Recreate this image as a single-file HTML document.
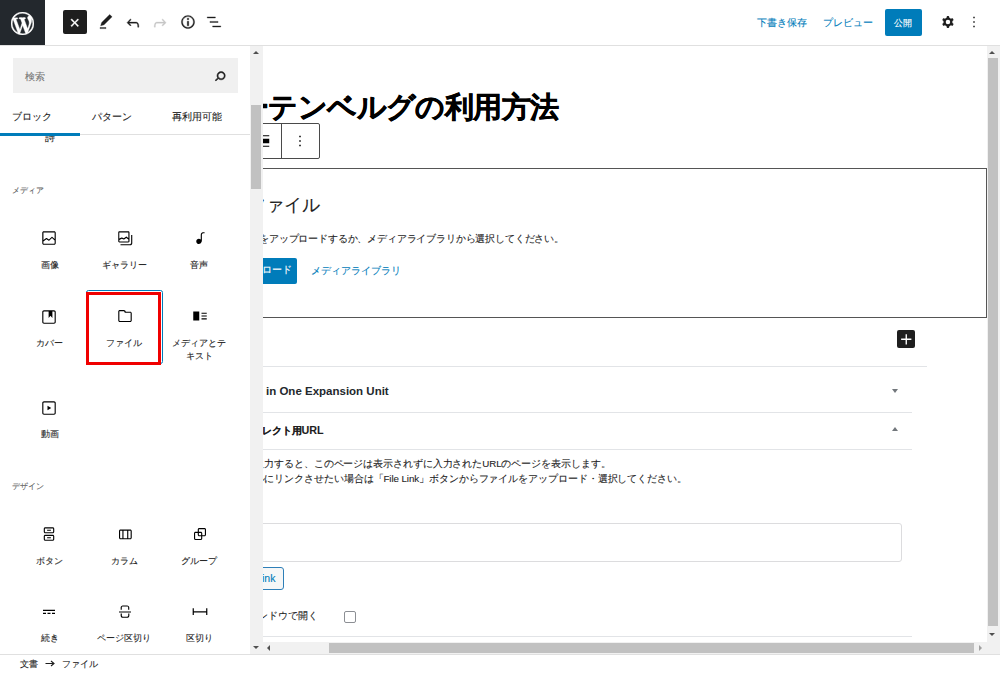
<!DOCTYPE html>
<html><head><meta charset="utf-8">
<style>
html,body{margin:0;padding:0;background:#fff;}
body{width:1000px;height:673px;overflow:hidden;position:relative;font-family:"Liberation Sans",sans-serif;color:#1e1e1e;font-size:9.75px;-webkit-text-stroke:0.1px currentColor;}
.a{position:absolute;}
.ic{position:absolute;width:18px;height:18px;}
.t{position:absolute;white-space:nowrap;line-height:1;}
.lbl{position:absolute;white-space:nowrap;line-height:13px;text-align:center;width:76px;font-size:9.3px;color:#1e1e1e;}
.cat{position:absolute;font-size:8.3px;color:#5f5f5f;line-height:1;white-space:nowrap;}
</style></head><body>

<!-- HEADER -->
<div class="a" style="left:0;top:0;width:45px;height:45px;background:#23282d;"></div>
<svg class="a" style="left:11px;top:11.5px;width:23px;height:23px" viewBox="0 0 20 20"><path fill="#fff" stroke="#fff" stroke-width="0.35" d="M20 10c0-5.51-4.49-10-10-10C4.48 0 0 4.49 0 10c0 5.52 4.48 10 10 10 5.51 0 10-4.48 10-10zM7.780 15.370L4.370 6.220c.55-.02 1.170-.08 1.170-.08.5-.06.44-1.130-.06-1.110 0 0-1.450.11-2.370.11-.18 0-.37 0-.58-.01C4.120 2.690 6.870 1.110 10 1.110c2.330 0 4.450.87 6.050 2.340-.68-.11-1.650.39-1.650 1.580 0 .74.45 1.360.9 2.100.35.61.55 1.360.55 2.460 0 1.490-1.400 5-1.400 5l-3.030-8.370c.54-.02.82-.17.82-.17.5-.05.44-1.250-.06-1.220 0 0-1.440.12-2.380.12-.87 0-2.330-.12-2.330-.12-.5-.03-.56 1.200-.06 1.220l.92.08 1.260 3.410zM17.410 10c.24-.64.74-1.870.43-4.250.7 1.290 1.050 2.710 1.050 4.250 0 3.290-1.730 6.240-4.400 7.780.97-2.590 1.940-5.200 2.920-7.780zM6.100 18.090C3.120 16.650 1.110 13.530 1.110 10c0-1.300.23-2.480.72-3.590C3.250 10.300 4.670 14.200 6.100 18.090zm4.030-6.630l2.580 6.980c-.86.29-1.760.45-2.710.45-.79 0-1.570-.11-2.290-.33.81-2.380 1.620-4.740 2.420-7.100z"/></svg>
<div class="a" style="left:0;top:45px;width:1000px;height:1px;background:#e0e0e0;"></div>

<div class="a" style="left:63px;top:10px;width:24px;height:24px;background:#1e1e1e;border-radius:2px;"></div>
<svg class="a" style="left:65.1px;top:12.75px;width:19.5px;height:19.5px" viewBox="0 0 24 24"><path fill="#fff" stroke="#fff" stroke-width="0.5" d="M12 13.06l3.712 3.713 1.061-1.06L13.061 12l3.712-3.712-1.06-1.06L12 10.938 8.288 7.227l-1.061 1.06L10.939 12l-3.712 3.712 1.06 1.061L12 13.061z"/></svg>
<svg class="ic" style="left:97px;top:13.2px" viewBox="0 0 24 24"><path fill="#1e1e1e" stroke="#1e1e1e" stroke-width="0.45" d="M20.1 5.1L16.9 2 6.2 12.7l-1.3 4.4 4.5-1.3L20.1 5.1zM4 20.8h8v-1.5H4v1.5z"/></svg>
<svg class="ic" style="left:124px;top:13.5px" viewBox="0 0 24 24"><path fill="#1e1e1e" stroke="#1e1e1e" stroke-width="0.45" d="M18.3 11.7c-.6-.6-1.4-.9-2.3-.9H6.7l2.9-3.3-1.1-1-4.5 5L8.5 16l1-1-2.7-2.7H16c.5 0 .9.2 1.3.5 1 1 1 3.4 1 4.5v.3h1.5v-.2c0-1.5 0-4.3-1.5-5.7z"/></svg>
<svg class="ic" style="left:151px;top:13.5px" viewBox="0 0 24 24"><path fill="#c7c7c7" stroke="#c7c7c7" stroke-width="0.45" d="M15.6 6.5l-1.1 1 2.9 3.3H8c-.9 0-1.7.3-2.3.9-1.4 1.5-1.4 4.2-1.4 5.6v.2h1.5v-.3c0-1.1 0-3.5 1-4.5.3-.3.7-.5 1.3-.5h9.2L14.5 15l1.1 1.1 4.6-4.6-4.6-5z"/></svg>
<svg class="ic" style="left:178.5px;top:12.9px" viewBox="0 0 24 24"><path fill="#1e1e1e" stroke="#1e1e1e" stroke-width="0.45" d="M12 3.2c-4.8 0-8.8 3.9-8.8 8.8 0 4.8 3.9 8.8 8.8 8.8 4.8 0 8.8-3.9 8.8-8.8 0-4.8-4-8.8-8.8-8.8zm0 16c-4 0-7.2-3.3-7.2-7.2C4.8 8 8 4.8 12 4.8s7.2 3.3 7.2 7.2c0 4-3.2 7.2-7.2 7.2zM11 17h2v-6h-2v6zm0-8h2V7h-2v2z"/></svg>
<svg class="ic" style="left:205px;top:13.3px" viewBox="0 0 24 24"><path fill="#1e1e1e" stroke="#1e1e1e" stroke-width="0.45" d="M13.8 5.2H3v1.5h10.8V5.2zm-3.6 12v1.5H21v-1.5H10.2zm7.2-6H6.6v1.5h10.8v-1.5z"/></svg>

<div class="t" style="left:756.5px;top:17.5px;color:#007cba;font-size:9.5px;">下書き保存</div>
<div class="t" style="left:822.5px;top:17.5px;color:#007cba;font-size:9.5px;">プレビュー</div>
<div class="a" style="left:885px;top:9px;width:37px;height:26.5px;background:#007cba;border-radius:2px;"></div>
<div class="t" style="left:893.8px;top:17.6px;color:#fff;font-size:9.4px;">公開</div>
<svg class="ic" style="left:938.5px;top:13.3px" viewBox="0 0 24 24"><path fill="#1e1e1e" fill-rule="evenodd" clip-rule="evenodd" d="M10.289 4.836A1 1 0 0111.275 4h1.306a1 1 0 01.987.836l.244 1.466c.787.26 1.503.679 2.108 1.218l1.393-.522a1 1 0 011.216.437l.653 1.13a1 1 0 01-.23 1.273l-1.148.944a6.025 6.025 0 010 2.435l1.149.946a1 1 0 01.23 1.272l-.653 1.13a1 1 0 01-1.216.437l-1.394-.522c-.605.54-1.32.958-2.108 1.218l-.244 1.466a1 1 0 01-.987.836h-1.306a1 1 0 01-.986-.836l-.244-1.466a5.995 5.995 0 01-2.108-1.218l-1.394.522a1 1 0 01-1.217-.436l-.653-1.131a1 1 0 01.23-1.272l1.149-.946a6.026 6.026 0 010-2.435l-1.148-.944a1 1 0 01-.23-1.272l.653-1.131a1 1 0 011.217-.437l1.393.522a5.994 5.994 0 012.108-1.218l.244-1.466zM14.929 12a3 3 0 11-6 0 3 3 0 016 0z"/></svg>
<svg class="ic" style="left:965.4px;top:13.4px" viewBox="0 0 24 24"><path fill="#1e1e1e" d="M13 19h-2v-2h2v2zm0-6h-2v-2h2v2zm0-6h-2V5h2v2z"/></svg>

<!-- SIDEBAR -->
<div class="a" style="left:13px;top:58px;width:225px;height:35px;background:#f0f0f0;"></div>
<div class="t" style="left:25px;top:72px;color:#757575;">検索</div>
<svg class="ic" style="left:210.9px;top:66.5px" viewBox="0 0 24 24"><path fill="#1e1e1e" stroke="#1e1e1e" stroke-width="0.7" d="M13.5 6C10.5 6 8 8.5 8 11.5c0 1.1.3 2.1.9 3l-3.4 3 1 1.1 3.4-2.9c1 .9 2.2 1.4 3.6 1.4 3 0 5.5-2.5 5.5-5.5C19 8.5 16.5 6 13.5 6zm0 9.5c-2.2 0-4-1.8-4-4s1.8-4 4-4 4 1.8 4 4-1.8 4-4 4z"/></svg>

<div class="t" style="left:12px;top:112px;">ブロック</div>
<div class="t" style="left:92px;top:112px;">パターン</div>
<div class="t" style="left:172px;top:112px;">再利用可能</div>
<div class="a" style="left:0;top:134px;width:249.5px;height:1px;background:#e0e0e0;"></div>
<div class="a" style="left:0;top:132.5px;width:80px;height:3px;background:#007cba;"></div>

<div id="sbs" class="a" style="left:0;top:135.5px;width:249.5px;height:518.5px;overflow:hidden;">
  <div class="a" style="left:0;top:-135.5px;width:249.5px;height:700px;">
    <div class="t" style="left:45px;top:133px;">詩</div>
    <div class="cat" style="left:12px;top:186px;">メディア</div>
    <!-- row1 -->
    <svg class="ic" style="left:40.25px;top:228.75px" viewBox="0 0 24 24"><path d="M19 3H5c-1.1 0-2 .9-2 2v14c0 1.1.9 2 2 2h14c1.100 0 2-.9 2-2V5c0-1.1-.9-2-2-2zM5 4.5h14c.3 0 .5.2.5.5v8.4l-3-2.9c-.3-.3-.8-.3-1 0L11.9 14 9 12c-.3-.2-.6-.2-.8 0l-3.6 2.6V5c-.1-.3.1-.5.4-.5zm14 15H5c-.3 0-.5-.2-.5-.5v-2.4l4.1-3 3 1.9c.3.2.7.2.9-.1L16 12l3.5 3.4V19c0 .3-.2.5-.5.5z"/></svg>
    <svg class="ic" style="left:116px;top:228.75px" viewBox="0 0 24 24"><path d="M20.2 8v11c0 .7-.6 1.2-1.2 1.2H6v1.5h13c1.5 0 2.7-1.2 2.7-2.8V8zM18 16.4V4.6c0-.9-.7-1.6-1.6-1.6H4.6C3.7 3 3 3.7 3 4.6v11.8c0 .9.7 1.6 1.6 1.6h11.8c.9 0 1.6-.7 1.6-1.6zM4.5 4.6c0-.1.1-.1.1-.1h11.8c.1 0 .1.1.1.1V12l-2.3-1.7c-.3-.2-.6-.2-.9 0l-2.9 2.1L8 11.3c-.2-.1-.5-.1-.7 0l-2.9 1.5V4.6zm0 11.8v-1.8l3.2-1.7 2.4 1.2c.2.1.5.1.8-.1l2.8-2 2.8 2v2.5c0 .1-.1.1-.1.1H4.6c0-.1-.1-.2-.1-.2z"/></svg>
    <svg class="ic" style="left:190.5px;top:228.75px" viewBox="0 0 24 24"><path d="M17.7 4.3c-1.2 0-2.8 0-3.8 1-.6.6-.9 1.5-.9 2.6V14c-.6-.6-1.5-1-2.5-1C8.6 13 7 14.6 7 16.5S8.6 20 10.5 20c1.5 0 2.8-1 3.3-2.3.5-.8.7-1.8.7-2.5V7.9c0-.7.2-1.2.5-1.6.6-.6 1.8-.6 2.8-.6h.3V4.3h-.4z"/></svg>
    <div class="lbl" style="left:11.5px;top:258.8px;">画像</div>
    <div class="lbl" style="left:86.3px;top:258.8px;">ギャラリー</div>
    <div class="lbl" style="left:161.3px;top:258.8px;">音声</div>
    <!-- row2 -->
    <div class="a" style="left:85.5px;top:289.5px;width:75.5px;height:72px;border:1.5px solid #007cba;border-radius:2.5px;"></div>
    <svg class="ic" style="left:40.25px;top:307.5px" viewBox="0 0 24 24"><path d="M18.7 3H5.3C4 3 3 4 3 5.3v13.4C3 20 4 21 5.3 21h13.4c1.3 0 2.3-1 2.3-2.3V5.3C21 4 20 3 18.7 3zm.8 15.7c0 .4-.4.8-.8.8H5.3c-.4 0-.8-.4-.8-.8V5.3c0-.4.4-.8.8-.8h6.2v8.9l2.5-3.100 2.5 3.100V4.5h2.2c.4 0 .8.4.8.8v13.4z"/></svg>
    <svg class="ic" style="left:115.5px;top:306.5px" viewBox="0 0 24 24"><path d="M19 6.2h-5.9l-.6-1.1C12 4.3 11.2 4 10.3 4H5c-1.1 0-2 .9-2 2v12c0 1.1.9 2 2 2h14c1.1 0 2-.9 2-2V8.2c0-1.1-.9-2-2-2zm.5 11.8c0 .3-.2.5-.5.5H5c-.3 0-.5-.2-.5-.5V6c0-.3.2-.5.5-.5h5.3c.3 0 .5.2.6.4l.7 1.3c.1.2.3.4.6.4H19c.3 0 .5.2.5.5V18z"/></svg>
    <svg class="ic" style="left:190.5px;top:306.5px" viewBox="0 0 24 24"><path d="M3 18h8V6H3v12zM14 7.5V9h7V7.5h-7zm0 5.3h7v-1.5h-7v1.5zm0 3.7h7V15h-7v1.5z"/></svg>
    <div class="lbl" style="left:11.5px;top:336.6px;">カバー</div>
    <div class="lbl" style="left:86.3px;top:336.6px;">ファイル</div>
    <div class="lbl" style="left:161.3px;top:336.6px;">メディアとテ<br>キスト</div>
    <div class="a" style="left:85.8px;top:292px;width:69.2px;height:66.7px;border:3px solid #f00000;"></div>
    <!-- row3 -->
    <svg class="ic" style="left:40.25px;top:398.75px" viewBox="0 0 24 24"><path d="M18.7 3H5.3C4 3 3 4 3 5.3v13.4C3 20 4 21 5.3 21h13.4c1.3 0 2.3-1 2.3-2.3V5.3C21 4 20 3 18.7 3zm.8 15.7c0 .4-.4.8-.8.8H5.3c-.4 0-.8-.4-.8-.8V5.3c0-.4.4-.8.8-.8h13.4c.4 0 .8.4.8.8v13.4zM10 15l5-3-5-3v6z"/></svg>
    <div class="lbl" style="left:11.5px;top:428.2px;">動画</div>

    <div class="cat" style="left:12px;top:482px;">デザイン</div>
    <svg class="ic" style="left:40.25px;top:524.75px" viewBox="0 0 24 24"><path d="M17 3H7c-1.1 0-2 .9-2 2v4c0 1.1.9 2 2 2h10c1.1 0 2-.9 2-2V5c0-1.1-.9-2-2-2zm.5 6c0 .3-.2.5-.5.5H7c-.3 0-.5-.2-.5-.5V5c0-.3.2-.5.5-.5h10c.3 0 .5.2.5.5v4zm-8-1.2h5V6.2h-5v1.6zM17 13H7c-1.1 0-2 .9-2 2v4c0 1.1.9 2 2 2h10c1.1 0 2-.9 2-2v-4c0-1.1-.9-2-2-2zm.5 6c0 .3-.2.5-.5.5H7c-.3 0-.5-.2-.5-.5v-4c0-.3.2-.5.5-.5h10c.3 0 .5.2.5.5v4zm-8-1.2h5v-1.5h-5v1.5z"/></svg>
    <svg class="ic" style="left:115.5px;top:524.75px" viewBox="0 0 24 24"><path d="M19 6H6c-1.1 0-2 .9-2 2v9c0 1.1.9 2 2 2h13c1.1 0 2-.9 2-2V8c0-1.1-.9-2-2-2zm-4.1 1.5v10H10v-10h4.9zM5.5 17V8c0-.3.2-.5.5-.5h2.5v10H6c-.3 0-.5-.2-.5-.5zm14 0c0 .3-.2.5-.5.5h-2.6v-10H19c.3 0 .5.2.5.5v9z"/></svg>
    <svg class="ic" style="left:190.5px;top:524.75px" viewBox="0 0 24 24"><path d="M18 4h-7c-1.1 0-2 .9-2 2v3H6c-1.1 0-2 .9-2 2v7c0 1.1.9 2 2 2h7c1.1 0 2-.9 2-2v-3h3c1.1 0 2-.9 2-2V6c0-1.1-.9-2-2-2zm-4.5 14c0 .3-.2.5-.5.5H6c-.3 0-.5-.2-.5-.5v-7c0-.3.2-.5.5-.5h3V13c0 1.1.9 2 2 2h2.5v3zm0-4.5H11c-.3 0-.5-.2-.5-.5v-2.5H13c.3 0 .5.2.5.5v2.5zm5-.5c0 .3-.2.5-.5.5h-3V11c0-1.1-.9-2-2-2h-2.5V6c0-.3.2-.5.5-.5h7c.3 0 .5.2.5.5v7z"/></svg>
    <div class="lbl" style="left:11.5px;top:554.8px;">ボタン</div>
    <div class="lbl" style="left:86.3px;top:554.8px;">カラム</div>
    <div class="lbl" style="left:161.3px;top:554.8px;">グループ</div>
    <svg class="ic" style="left:40.25px;top:602.75px" viewBox="0 0 24 24"><path d="M4 9v1.5h16V9H4zm12 5.5h4V13h-4v1.5zm-6 0h4V13h-4v1.5zm-6 0h4V13H4v1.5z"/></svg>
    <svg class="ic" style="left:115.5px;top:602.75px" viewBox="0 0 24 24"><path d="M7.8 6c0-.7.6-1.2 1.2-1.2h6c.7 0 1.2.6 1.2 1.2v3h1.5V6c0-1.5-1.2-2.8-2.8-2.8H9C7.5 3.2 6.2 4.5 6.2 6v3h1.5V6zm8.4 11c0 .7-.6 1.2-1.2 1.2H9c-.7 0-1.2-.6-1.2-1.2v-3H6.2v3c0 1.5 1.2 2.8 2.8 2.8h6c1.5 0 2.8-1.2 2.8-2.8v-3h-1.5v3zM4 11.2v1.5h16v-1.5H4z"/></svg>
    <svg class="ic" style="left:190.5px;top:602.75px" viewBox="0 0 24 24"><path d="M20.2 7v4H3.8V7H2.2v9h1.6v-3.5h16.4V16h1.6V7z"/></svg>
    <div class="lbl" style="left:11.5px;top:631.6px;">続き</div>
    <div class="lbl" style="left:86.3px;top:631.6px;">ページ区切り</div>
    <div class="lbl" style="left:161.3px;top:631.6px;">区切り</div>
  </div>
</div>

<!-- sidebar scrollbar -->
<div class="a" style="left:249.5px;top:46px;width:13px;height:608px;background:#f1f1f1;"></div>
<div class="a" style="left:251px;top:104.8px;width:9.7px;height:84.7px;background:#c1c1c1;"></div>
<div class="a" style="left:253px;top:50.5px;width:0;height:0;border-left:3.5px solid transparent;border-right:3.5px solid transparent;border-bottom:3.5px solid #505050;"></div>
<div class="a" style="left:253px;top:645.5px;width:0;height:0;border-left:3.5px solid transparent;border-right:3.5px solid transparent;border-top:3.5px solid #505050;"></div>

<!-- CANVAS -->
<div id="cv" class="a" style="left:262.5px;top:46px;width:724.5px;height:597px;overflow:hidden;">
  <div class="a" style="left:-262.5px;top:-46px;width:1000px;height:700px;">
    <div class="t" style="left:240.1px;top:93px;letter-spacing:-0.62px;font-size:29.25px;font-weight:bold;color:#000;-webkit-text-stroke:0.5px #000;">ーテンベルグの利用方法</div>
    <!-- block toolbar -->
    <div class="a" style="left:200px;top:123px;width:118px;height:33.7px;border:1px solid #4a4a4a;border-radius:2px;background:#fff;"></div>
    <div class="a" style="left:281px;top:123px;width:1px;height:35.7px;background:#4a4a4a;"></div>
    <svg class="ic" style="left:255px;top:132px" viewBox="0 0 24 24"><path d="M5 15h14V9H5v6zm0 4.8h14v-1.5H5v1.5zM5 4.2v1.5h14V4.2H5z"/></svg>
    <svg class="ic" style="left:291.3px;top:132px" viewBox="0 0 24 24"><path d="M13 19h-2v-2h2v2zm0-6h-2v-2h2v2zm0-6h-2V5h2v2z"/></svg>
    <!-- file block -->
    <div class="a" style="left:150px;top:168px;width:835px;height:148px;border:1px solid #555;"></div>
    <div class="t" style="left:248px;top:196px;font-size:18px;">ファイル</div>
    <div class="t" style="left:219.85px;top:234px;letter-spacing:-0.17px;">ファイルをアップロードするか、メディアライブラリから選択してください。</div>
    <div class="a" style="left:200px;top:257.5px;width:97px;height:26px;background:#007cba;border-radius:2px;"></div>
    <div class="t" style="left:262px;top:265px;color:#fff;">ロード</div>
    <div class="t" style="left:311px;top:265.5px;color:#007cba;font-size:9.5px;">メディアライブラリ</div>
    <!-- plus -->
    <div class="a" style="left:896.5px;top:330px;width:18.5px;height:17.5px;background:#1e1e1e;border-radius:2px;"></div>
    <svg class="a" style="left:895.5px;top:328.5px;width:20.5px;height:20.5px" viewBox="0 0 24 24"><path fill="#fff" d="M18 11.2h-5.2V6h-1.6v5.2H6v1.6h5.2V18h1.6v-5.2H18z"/></svg>

    <!-- metaboxes -->
    <div class="a" style="left:200px;top:366px;width:726.5px;height:1px;background:#e2e4e7;"></div>
    <div class="t" style="left:266px;top:386px;font-size:11.5px;font-weight:bold;color:#23282d;-webkit-text-stroke:0;">in One Expansion Unit</div>
    <div class="a" style="left:892px;top:388px;width:0;height:0;border-left:3.5px solid transparent;border-right:3.5px solid transparent;border-top:4px solid #72777c;margin-top:1px;"></div>
    <div class="a" style="left:200px;top:411.5px;width:711.5px;height:1px;background:#e2e4e7;"></div>
    <div class="t" style="left:261.5px;top:424.5px;font-size:10px;font-weight:bold;color:#1e1e1e;">レクト用<span style="font-size:10.75px">URL</span></div>
    <div class="a" style="left:892px;top:426.5px;width:0;height:0;border-left:3.5px solid transparent;border-right:3.5px solid transparent;border-bottom:4px solid #72777c;"></div>
    <div class="a" style="left:200px;top:449px;width:711.5px;height:1px;background:#e2e4e7;"></div>
    <div class="t" style="left:254.3px;top:458.5px;letter-spacing:-0.09px;">入力すると、このページは表示されずに入力されたURLのページを表示します。</div>
    <div class="t" style="left:254.5px;top:473.5px;letter-spacing:-0.08px;">ルにリンクさせたい場合は「File Link」ボタンからファイルをアップロード・選択してください。</div>
    <div class="a" style="left:200px;top:522.5px;width:699.5px;height:37.5px;border:1px solid #dcdcde;border-radius:3px;"></div>
    <div class="a" style="left:200px;top:567.3px;width:81.9px;height:20.4px;border:1px solid #2e7fb8;border-radius:3px;background:#f6f7f7;"></div>
    <div class="t" style="left:262px;top:573px;color:#007cba;font-size:10.5px;">ink</div>
    <div class="t" style="left:258px;top:611px;">ンドウで開く</div>
    <div class="a" style="left:343.7px;top:610.8px;width:10px;height:10px;border:1px solid #8c8f94;border-radius:2px;"></div>
    <div class="a" style="left:200px;top:636px;width:711.5px;height:1px;background:#e2e4e7;"></div>
  </div>
</div>

<!-- canvas scrollbars -->
<div class="a" style="left:987px;top:46px;width:13px;height:608px;background:#f1f1f1;"></div>
<div class="a" style="left:988px;top:58.4px;width:10px;height:567.6px;background:#c1c1c1;"></div>
<div class="a" style="left:989px;top:50.5px;width:0;height:0;border-left:3.5px solid transparent;border-right:3.5px solid transparent;border-bottom:3.5px solid #505050;"></div>
<div class="a" style="left:989px;top:632.5px;width:0;height:0;border-left:3.5px solid transparent;border-right:3.5px solid transparent;border-top:3.5px solid #505050;"></div>
<div class="a" style="left:262.5px;top:641.5px;width:724.5px;height:12.5px;background:#f1f1f1;"></div>
<div class="a" style="left:328.6px;top:643.3px;width:645.2px;height:9.4px;background:#c1c1c1;"></div>
<div class="a" style="left:267px;top:644.5px;width:0;height:0;border-top:3.5px solid transparent;border-bottom:3.5px solid transparent;border-right:3.5px solid #505050;"></div>
<div class="a" style="left:979px;top:644.5px;width:0;height:0;border-top:3.5px solid transparent;border-bottom:3.5px solid transparent;border-left:3.5px solid #a0a0a0;"></div>

<!-- FOOTER -->
<div class="a" style="left:0;top:654px;width:1000px;height:19px;background:#fff;border-top:1px solid #e0e0e0;"></div>
<div class="t" style="left:19.5px;top:659.3px;font-size:9.4px;">文書</div><svg class="a" style="left:44px;top:659px;width:12px;height:9px" viewBox="0 0 12 9"><path d="M1.5 4.5h8.5M7 2l3 2.5L7 7" fill="none" stroke="#1e1e1e" stroke-width="1.1"/></svg><div class="t" style="left:61.5px;top:659.3px;font-size:9.4px;">ファイル</div>

</body></html>
